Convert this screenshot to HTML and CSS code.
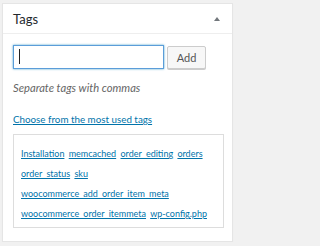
FILE: index.html
```html
<!DOCTYPE html>
<html>
<head>
<meta charset="utf-8">
<link rel="stylesheet" href="styles.css">
</head>
<body>
<div class="postbox">
  <div class="postbox-header">
    <h2 class="postbox-title">Tags</h2>
    <span class="toggle-arrow"></span>
  </div>
  <div class="inside">
    <div class="tag-add">
      <div class="input-wrap"><input type="text" class="new-tag"></div>
      <button class="add-btn" type="button">Add</button>
    </div>
    <p class="howto">Separate tags with commas</p>
    <p class="choose"><a href="#" class="choose-link">Choose from the most used tags</a></p>
    <div class="tag-cloud">
      <a href="#">Installation</a> <a href="#">memcached</a> <a href="#">order_editing</a> <a href="#">orders</a> <a href="#">order_status</a> <a href="#">sku</a> <a href="#">woocommerce_add_order_item_meta</a> <a href="#">woocommerce_order_itemmeta</a> <a href="#">wp-config.php</a>
    </div>
  </div>
</div>
</body>
</html>
```
FILE: styles.css
```css
html, body {
  margin: 0;
  padding: 0;
  background: #f1f1f1;
}
body {
  font-family: Lato, "Open Sans", sans-serif;
  color: #23282d;
  padding: 3px 0 0 2px;
}
.postbox {
  box-sizing: border-box;
  width: 231px;
  height: 239px;
  background: #fff;
  border: 1px solid #e5e5e5;
  box-shadow: 0 1px 1px rgba(0,0,0,0.04);
}
.postbox-header {
  box-sizing: border-box;
  height: 30px;
  border-bottom: 1px solid #eee;
  display: flex;
  align-items: center;
  justify-content: space-between;
  padding: 0 10px 0 10px;
}
.postbox-title {
  margin: 0;
  font-size: 13px;
  font-weight: 400;
  color: #23282d;
  line-height: 1;
  padding-top: 2px;
}
.toggle-arrow {
  width: 0;
  height: 0;
  border-left: 3px solid transparent;
  border-right: 3px solid transparent;
  border-bottom: 4px solid #72777c;
  margin-right: 2px;
}
.inside {
  padding: 11px 10px 0 10px;
}
.tag-add {
  display: flex;
  align-items: flex-start;
  gap: 3px;
}
.input-wrap {
  position: relative;
}
.input-wrap::after {
  content: "";
  position: absolute;
  left: 6px;
  top: 4px;
  width: 1px;
  height: 15px;
  background: #222;
}
.new-tag {
  display: block;
  box-sizing: border-box;
  width: 151px;
  height: 24px;
  margin: 0;
  padding: 0 4px;
  border: 1px solid #5b9dd9;
  box-shadow: 0 0 2px rgba(30,140,190,0.8);
  border-radius: 0;
  outline: none;
  background: #fff;
  font-family: inherit;
}
.add-btn {
  box-sizing: border-box;
  width: 39px;
  height: 23px;
  margin: 1px 0 0 0;
  padding: 0;
  border: 1px solid #ccc;
  border-radius: 2px;
  background: #f7f7f7;
  box-shadow: 0 1px 0 #ccc;
  color: #555;
  font-family: inherit;
  font-size: 11px;
}
.howto {
  margin: 12px 0 0 0;
  font-size: 11.2px;
  font-style: italic;
  color: #666;
  line-height: 14px;
}
.choose {
  margin: 17px 0 0 0;
  font-size: 9.8px;
  line-height: 14px;
}
.choose-link {
  color: #0073aa;
  text-decoration: underline;
}
.tag-cloud {
  box-sizing: border-box;
  width: 211px;
  height: 94px;
  margin-top: 8px;
  border: 1px solid #ddd;
  padding: 9px 6px 0 7px;
  font-size: 9px;
  line-height: 20px;
  word-spacing: 2px;
}
.tag-cloud a {
  color: #0073aa;
  text-decoration: underline;
}
```
